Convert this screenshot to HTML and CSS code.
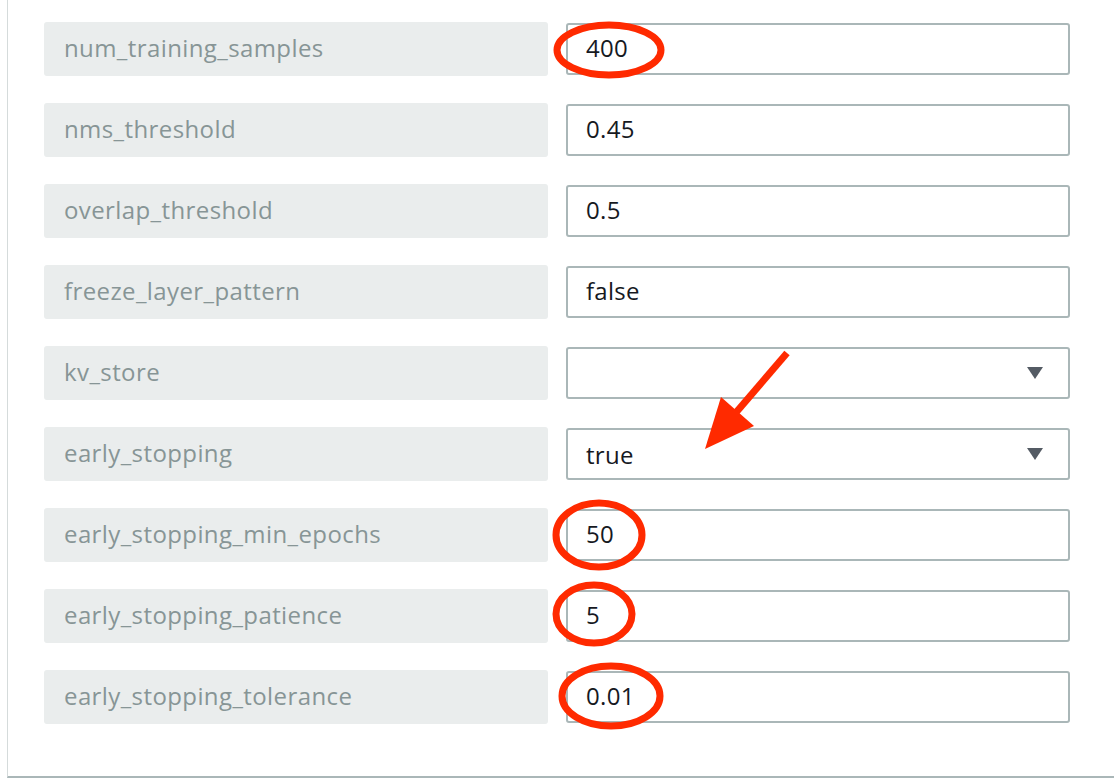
FILE: index.html
```
<!DOCTYPE html>
<html>
<head>
<meta charset="utf-8">
<link rel="stylesheet" href="styles.css">
</head>
<body>
<div class="panel">
  <div class="form">
    <div class="label">num_training_samples</div>
    <div class="field">400</div>
    <div class="label">nms_threshold</div>
    <div class="field">0.45</div>
    <div class="label">overlap_threshold</div>
    <div class="field">0.5</div>
    <div class="label">freeze_layer_pattern</div>
    <div class="field">false</div>
    <div class="label">kv_store</div>
    <div class="field select"><span></span><i class="caret"></i></div>
    <div class="label">early_stopping</div>
    <div class="field select"><span>true</span><i class="caret"></i></div>
    <div class="label">early_stopping_min_epochs</div>
    <div class="field">50</div>
    <div class="label">early_stopping_patience</div>
    <div class="field">5</div>
    <div class="label">early_stopping_tolerance</div>
    <div class="field">0.01</div>
  </div>
</div>
<svg class="marks" width="1114" height="780" viewBox="0 0 1114 780">
  <g fill="none" stroke="#ff2a00" stroke-width="7">
    <ellipse cx="609" cy="50" rx="52" ry="25"/>
    <ellipse cx="599" cy="535" rx="43" ry="32"/>
    <ellipse cx="594" cy="614" rx="38" ry="29"/>
    <ellipse cx="611" cy="696" rx="49" ry="30"/>
  </g>
  <line x1="787" y1="353" x2="733" y2="416" stroke="#ff2a00" stroke-width="7"/>
  <polygon points="705,449 721,397 754,426" fill="#ff2a00"/>
</svg>
</body>
</html>
```
FILE: styles.css
```
html, body {
  margin: 0;
  padding: 0;
  background: #ffffff;
}
body {
  width: 1114px;
  height: 780px;
  overflow: hidden;
  position: relative;
  font-family: "Open Sans", "Noto Sans", sans-serif;
}
.panel {
  margin-left: 7px;
  height: 778px;
  box-sizing: border-box;
  border-left: 1px solid #d5dbdb;
  border-bottom: 2px solid #aab7b8;
  padding: 22px 44px 0 36px;
}
.form {
  display: grid;
  grid-template-columns: 504px 504px;
  column-gap: 18px;
  row-gap: 27px;
  grid-auto-rows: 54px;
}
.label {
  background: #eaeded;
  border-radius: 3px;
  color: #879596;
  font-size: 24px;
  letter-spacing: 0.4px;
  display: flex;
  align-items: center;
  padding-left: 20px;
  padding-bottom: 3px;
  box-sizing: border-box;
}
.field {
  align-self: center;
  height: 52px;
  box-sizing: border-box;
  border: 2px solid #aab7b8;
  border-radius: 3px;
  color: #16191f;
  font-size: 24px;
  letter-spacing: 0.3px;
  display: flex;
  align-items: center;
  padding-left: 18px;
  padding-bottom: 3px;
}
.select {
  justify-content: space-between;
  padding-right: 25px;
  padding-bottom: 0;
}
.caret {
  width: 0;
  height: 0;
  border-left: 8px solid transparent;
  border-right: 8px solid transparent;
  border-top: 12px solid #545b64;
}
.marks {
  position: absolute;
  left: 0;
  top: 0;
  pointer-events: none;
}
```
